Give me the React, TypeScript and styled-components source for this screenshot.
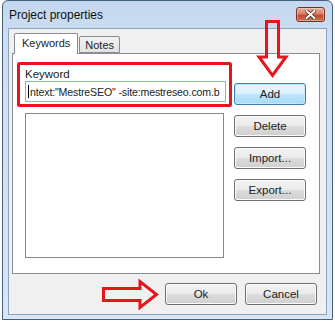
import React from "react";
import styled, { createGlobalStyle } from "styled-components";

const GlobalStyle = createGlobalStyle`
  html, body {
    margin: 0;
    padding: 0;
    background: #ffffff;
  }
  body {
    font-family: "Liberation Sans", Arial, sans-serif;
    font-size: 11px;
    color: #000;
  }
`;

const Page = styled.div`
  position: relative;
  width: 335px;
  height: 321px;
  overflow: hidden;
`;

const Window = styled.div`
  box-sizing: border-box;
  margin-left: 2px;
  width: 331px;
  height: 320px;
  border: 1px solid #44607f;
  border-radius: 6px 6px 0 0;
  background: linear-gradient(#c3d7ee 0px, #cddff2 40px, #d8e6f5 100%);
  display: flex;
  flex-direction: column;
`;

const TitleBar = styled.div`
  height: 27px;
  display: flex;
  align-items: center;
  justify-content: space-between;
  padding: 0 6px 0 6px;
`;

const Title = styled.span`
  font-size: 12px;
  color: #111;
`;

const CloseButton = styled.div`
  box-sizing: border-box;
  width: 29px;
  height: 15px;
  margin-right: 1px;
  border: 1px solid #7a3124;
  border-radius: 3px;
  background: linear-gradient(#e9a997 0%, #d9826b 45%, #c4492f 55%, #d26a4f 100%);
  box-shadow: inset 0 0 0 1px rgba(255, 255, 255, 0.35);
  display: flex;
  align-items: center;
  justify-content: center;
`;

const Client = styled.div`
  box-sizing: border-box;
  flex: 1;
  margin: 0 5px 4px 5px;
  border: 1px solid #8ea2bb;
  background: #f0f0f0;
  padding: 4px 6px 0 3px;
  display: flex;
  flex-direction: column;
`;

const TabStrip = styled.div`
  display: flex;
  align-items: flex-end;
  height: 20px;
  padding-left: 2px;
  position: relative;
  z-index: 1;
`;

const Tab = styled.div<{ $active?: boolean }>`
  box-sizing: border-box;
  height: ${(p) => (p.$active ? "21px" : "17px")};
  margin-bottom: ${(p) => (p.$active ? "-1px" : "0")};
  padding: ${(p) => (p.$active ? "3px 7px 0 7px" : "2px 5px 0 5px")};
  border: 1px solid #898c95;
  border-bottom: ${(p) => (p.$active ? "none" : "1px solid #898c95")};
  border-radius: 2px 2px 0 0;
  background: ${(p) =>
    p.$active ? "#ffffff" : "linear-gradient(#f2f2f2, #e3e3e3)"};
  margin-left: ${(p) => (p.$active ? "0" : "1px")};
  white-space: nowrap;
  color: #222;
`;

const Panel = styled.div`
  box-sizing: border-box;
  height: 221px;
  border: 1px solid #898c95;
  background: #ffffff;
  padding: 13px 0 0 12px;
  display: flex;
  gap: 8px;
`;

const FieldColumn = styled.div`
  width: 201px;
  display: flex;
  flex-direction: column;
`;

const FieldLabel = styled.div`
  height: 14px;
  line-height: 14px;
  font-size: 11.5px;
  color: #222;
`;

const TextInput = styled.div`
  box-sizing: border-box;
  height: 21px;
  border: 1px solid #7eb4ea;
  background: #fff;
  padding: 0 0 0 2px;
  display: flex;
  align-items: center;
  overflow: hidden;
  white-space: nowrap;
  font-size: 10.6px;
  letter-spacing: -0.15px;
  color: #222;
`;

const Caret = styled.span`
  display: inline-block;
  width: 1px;
  height: 13px;
  background: #000;
  margin-right: 1px;
  flex: none;
`;

const ListBox = styled.div`
  box-sizing: border-box;
  margin-top: 11px;
  width: 199px;
  height: 145px;
  border: 1px solid #828790;
  background: #fff;
`;

const ButtonColumn = styled.div`
  display: flex;
  flex-direction: column;
  gap: 10px;
  padding-top: 16px;
`;

const Button = styled.button<{ $default?: boolean }>`
  box-sizing: border-box;
  width: 72px;
  height: 22px;
  padding: 0;
  font-family: "Liberation Sans", Arial, sans-serif;
  font-size: 11.5px;
  color: #222;
  border: 1px solid ${(p) => (p.$default ? "#3c7fb1" : "#707070")};
  border-radius: 3px;
  background: ${(p) =>
    p.$default
      ? "linear-gradient(#eaf6fd 0%, #d9f0fc 50%, #bee6fd 50%, #a7d9f5 100%)"
      : "linear-gradient(#f2f2f2 0%, #ebebeb 50%, #dddddd 50%, #cfcfcf 100%)"};
  box-shadow: inset 0 0 0 1px ${(p) => (p.$default ? "#c8e6f8" : "#fbfbfb")};
`;

const Footer = styled.div`
  display: flex;
  justify-content: flex-end;
  gap: 8px;
  padding-top: 9px;
  margin-right: 3px;
`;

const Annotations = styled.svg`
  position: absolute;
  left: 0;
  top: 0;
  pointer-events: none;
`;

const App: React.FC = () => {
  return (
    <Page>
      <GlobalStyle />
      <Window>
        <TitleBar>
          <Title>Project properties</Title>
          <CloseButton>
            <svg width="11" height="9" viewBox="0 0 11 9">
              <path
                d="M1.5 1 L9.5 8 M9.5 1 L1.5 8"
                stroke="#5a1d12"
                strokeWidth="3.4"
                strokeLinecap="round"
              />
              <path
                d="M1.5 1 L9.5 8 M9.5 1 L1.5 8"
                stroke="#ffffff"
                strokeWidth="2"
                strokeLinecap="round"
              />
            </svg>
          </CloseButton>
        </TitleBar>
        <Client>
          <TabStrip>
            <Tab $active>Keywords</Tab>
            <Tab>Notes</Tab>
          </TabStrip>
          <Panel>
            <FieldColumn>
              <FieldLabel>Keyword</FieldLabel>
              <TextInput>
                <Caret />
                ntext:"MestreSEO" -site:mestreseo.com.b
              </TextInput>
              <ListBox />
            </FieldColumn>
            <ButtonColumn>
              <Button $default>Add</Button>
              <Button>Delete</Button>
              <Button>Import...</Button>
              <Button>Export...</Button>
            </ButtonColumn>
          </Panel>
          <Footer>
            <Button>Ok</Button>
            <Button>Cancel</Button>
          </Footer>
        </Client>
      </Window>
      <Annotations width="335" height="321" viewBox="0 0 335 321">
        <g fill="none" stroke="#e8141b" strokeWidth="3" strokeLinejoin="miter">
          <rect x="18.5" y="63.5" width="212" height="42" rx="1" />
          <polygon points="266.5,21.5 278.5,21.5 278.5,57 286,57 272.5,75.5 259,57 266.5,57" />
          <polygon points="103.5,288.5 140,288.5 140,281.5 156.5,294.5 140,307.5 140,300.5 103.5,300.5" />
        </g>
      </Annotations>
    </Page>
  );
};

export default App;
